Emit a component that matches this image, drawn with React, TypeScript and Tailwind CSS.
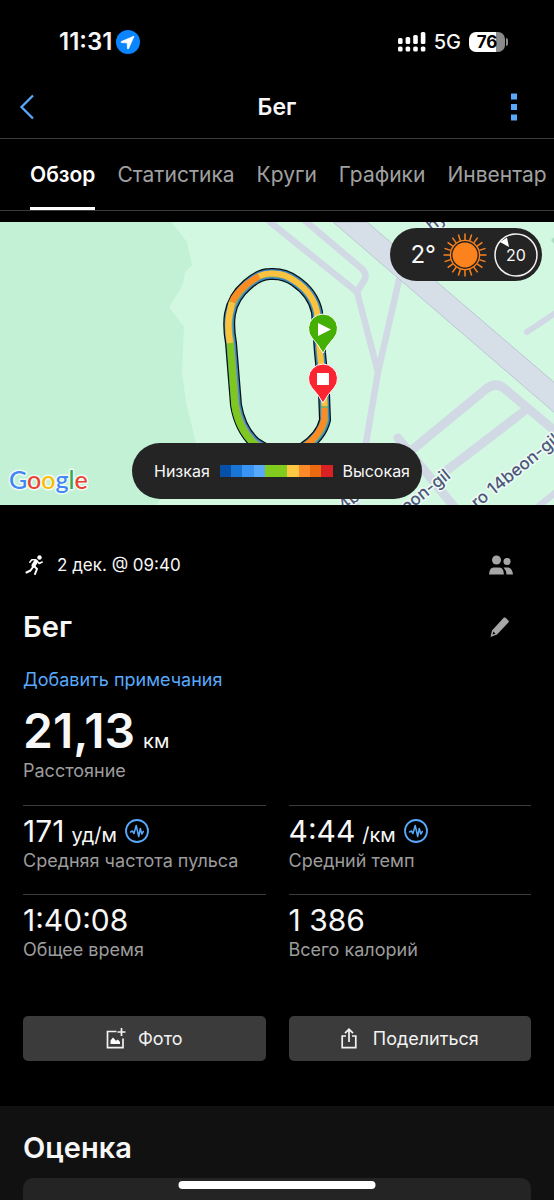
import React from "react";

function NavigationBadge() {
  return (
    <svg viewBox="0 0 24 24" className="h-6 w-6 shrink-0" aria-hidden="true">
      <circle cx="12" cy="12" r="12" fill="#0a84ff" />
      <path d="M18 6.200 L5.300 11.600 Q4.600 12.300 5.600 12.600 L11.200 12.800 L11.500 18.400 Q11.800 19.400 12.500 18.700 Z" fill="#fff" stroke="#fff" strokeWidth="0.800" strokeLinejoin="round" />
    </svg>
  );
}

function SignalIcon() {
  return (
    <svg viewBox="0 0 28 20" className="h-5 w-7 shrink-0" fill="#fff" aria-hidden="true">
      <rect x="0" y="6" width="4.600" height="6" rx="1.600" />
      <rect x="7.600" y="5" width="4.600" height="7" rx="1.600" />
      <rect x="15.200" y="3" width="4.600" height="9" rx="1.600" />
      <rect x="22.800" y="0" width="4.600" height="12" rx="1.600" />
      <rect x="0" y="14.500" width="4.600" height="5" rx="1.600" />
      <rect x="7.600" y="14.500" width="4.600" height="5" rx="1.600" />
      <rect x="15.200" y="14.500" width="4.600" height="5" rx="1.600" />
      <rect x="22.800" y="14.500" width="4.600" height="5" rx="1.600" />
    </svg>
  );
}

function StatusBar() {
  return (
    <div className="flex h-[84px] items-center justify-between pr-[46px] pl-[59px]">
      <div className="flex items-center gap-1">
        <span className="text-[24px] leading-7 font-semibold">11:31</span>
        <NavigationBadge />
      </div>
      <div className="flex items-center gap-2">
        <SignalIcon />
        <span className="text-[20px] leading-6 font-medium">5G</span>
        <div className="flex items-center gap-px">
          <div className="flex h-5 w-9 items-center justify-center overflow-hidden rounded-[7px] bg-linear-to-r from-white from-76% to-[#8a8a8a] to-76% text-[17px] leading-5 font-bold text-black">
            76
          </div>
          <span className="h-2 w-0.5 rounded-r-full bg-[#8a8a8a]" />
        </div>
      </div>
    </div>
  );
}

function Header() {
  return (
    <header className="grid h-[55px] grid-cols-3 items-center border-b border-[#3c3c3c] px-[19px] pb-2">
      <button type="button" aria-label="Назад" className="justify-self-start">
        <svg viewBox="0 0 16 26" className="h-[26px] w-4 fill-none stroke-[#58a9fb] stroke-[2.3]" aria-hidden="true">
          <path d="M14 1.500 L2.500 13 L14 24.500" />
        </svg>
      </button>
      <h1 className="justify-self-center text-[23px] leading-7 font-semibold">Бег</h1>
      <button type="button" aria-label="Меню" className="justify-self-end px-[18px]">
        <svg viewBox="0 0 6 28" className="h-7 w-1.5 fill-[#58a9fb]" aria-hidden="true">
          <path d="M0 0.500h6v6H0zM0 11h6v6H0zM0 21.500h6v6H0z" />
        </svg>
      </button>
    </header>
  );
}

const TABS = ["Обзор", "Статистика", "Круги", "Графики", "Инвентар"];

function Tabs() {
  return (
    <nav className="flex h-[72px] gap-[22px] overflow-hidden border-b border-[#3c3c3c] pl-[30px] text-[21px] leading-6">
      {TABS.map((tab, i) => (
        <button
          key={tab}
          type="button"
          aria-current={i === 0 ? "page" : undefined}
          className={
            i === 0
              ? "shrink-0 border-b-3 border-white pt-1 font-semibold text-white"
              : "shrink-0 border-b-3 border-transparent pt-1 text-[#a0a0a0]"
          }
        >
          {tab}
        </button>
      ))}
    </nav>
  );
}

const TRACK =
  "M284 234 Q268 230 255 221 Q240 207 236 183 L231 121 Q228 104 230 92 Q233 75 247 63 Q259 52 270 52 Q284 51 295 59 Q313 71 317 90 L320 131 L324 171 L325 198 Q321 215 302 227 Q294 232 284 234Z";

function MapDrawing() {
  return (
    <svg viewBox="0 0 554 283" preserveAspectRatio="xMidYMid slice" className="h-full w-full" aria-hidden="true">
      <rect width="554" height="283" fill="#d3f8e2" />
      <path d="M0 0H171L187 20L192 43L185 50Q184 60 180 68L169 85L184 105L182 151L186 180L196 221L157 283H0Z" fill="#c3f1d5" />
      <g fill="none" stroke="#d0d9e4" strokeWidth="6.500" strokeLinejoin="round" strokeLinecap="round">
        <path d="M270 0 L357 70 L378 150 L366 221 L356 283" />
        <path d="M303 -3 L361 46 Q367 51 365 57 L357 70" />
        <path d="M399 58 L378 150" />
        <path d="M412 228 L486 167 Q496 159 505 167 L554 208" strokeWidth="9" />
        <path d="M523 190 L446 249" strokeWidth="9" />
        <path d="M398 216 L456 287" strokeWidth="9" />
        <path d="M527 110 L560 88" strokeWidth="6" />
        <path d="M535 287 L560 267" />
      </g>
      <path d="M333 0H367L556 162V192Z" fill="#d6dfe8" stroke="#bcc6d4" strokeWidth="1" />
      <path d="M551 18L554 15V22Z" fill="#a9dfc0" />
      <g fontFamily="Inter, sans-serif" fontSize="17" fontWeight="500" fill="#4b5878" stroke="#eefaf5" strokeWidth="3" paintOrder="stroke" strokeLinejoin="round">
        <text transform="translate(477 287) rotate(-39)">ro 14beon-gil</text>
        <text transform="translate(390 305) rotate(-39)">4beon-gil</text>
        <text transform="translate(344 290) rotate(-39)">4beon</text>
        <text transform="translate(432 10) rotate(-39)">hy</text>
      </g>
      <g fill="none" strokeLinejoin="round">
        <path d={TRACK} stroke="#06140f" strokeWidth="12" />
        <path d={TRACK} stroke="#3b86c8" strokeWidth="9.500" />
        <path d={TRACK} stroke="#8fae5e" strokeWidth="6.500" />
        <path d="M268 230 L254 222 Q238 207 234.500 183 L230 121" stroke="#7dc81e" strokeWidth="6.500" />
        <path d="M230 121 Q227 104 229.500 92 L232 80" stroke="#f9c33f" strokeWidth="6.500" />
        <path d="M232 80 Q236 71 247 62 L259 54" stroke="#fb8c24" strokeWidth="6.500" />
        <path d="M259 54 Q266 51 272 51.500 Q284 51 295 59 Q313 71 317 90 L320 131 L324 171 L324.500 184" stroke="#f9c33f" strokeWidth="6" />
        <path d="M324.500 186 L324 198 Q320 214 302 226" stroke="#fb8c24" strokeWidth="6" />
      </g>
      <g>
        <path d="M323 131 Q318 122 312 116 A14.500 14.500 0 1 1 334 116 Q328 122 323 131Z" fill="#43b003" stroke="#fff" strokeWidth="1" />
        <path d="M318 101 L331 107.500 L318 114Z" fill="#fff" />
        <path d="M323 181 Q318 172 312 166 A14.500 14.500 0 1 1 334 166 Q328 172 323 181Z" fill="#fa2530" stroke="#fff" strokeWidth="1" />
        <rect x="317" y="151" width="12" height="12" fill="#fff" />
      </g>
      <text x="9" y="267" fontFamily="Lato, sans-serif" fontSize="25" fontWeight="500" stroke="#eefbf3" strokeWidth="3" paintOrder="stroke" strokeLinejoin="round">
        <tspan fill="#4285f4">G</tspan>
        <tspan fill="#ea4335">o</tspan>
        <tspan fill="#fbbc05">o</tspan>
        <tspan fill="#4285f4">g</tspan>
        <tspan fill="#34a853">l</tspan>
        <tspan fill="#ea4335">e</tspan>
      </text>
    </svg>
  );
}

const SUN_RAYS = Array.from({ length: 20 }, (_, i) => i * 18);

function SunIcon() {
  return (
    <svg viewBox="0 0 44 44" className="h-11 w-11 shrink-0" fill="none" stroke="#fc821d" aria-hidden="true">
      <circle cx="22" cy="22" r="12.500" fill="#fc821d" stroke="none" />
      <circle cx="22" cy="22" r="14.600" strokeWidth="1.300" />
      {SUN_RAYS.map((angle) => (
        <path key={angle} d="M22 0.500V7" strokeWidth="1.500" transform={`rotate(${angle} 22 22)`} />
      ))}
    </svg>
  );
}

function WindDial() {
  return (
    <div className="relative flex h-11 w-11 shrink-0 items-center justify-center">
      <svg viewBox="0 0 44 44" className="absolute inset-0 h-11 w-11" aria-hidden="true">
        <circle cx="22" cy="22" r="21" fill="none" stroke="#f2f2f2" strokeWidth="1.500" />
        <path d="M6 9 L13 4.500 L15 14Z" fill="#fff" />
      </svg>
      <span className="relative text-[16px] leading-5">20</span>
    </div>
  );
}

const SCALE = [
  "flex-2 bg-[#0650a8]",
  "flex-2 bg-[#1976d6]",
  "flex-2 bg-[#3a94f4]",
  "flex-2 bg-[#58a9fb]",
  "flex-4 bg-[#80cb1e]",
  "flex-2 bg-[#fcc742]",
  "flex-2 bg-[#fd8928]",
  "flex-2 bg-[#ec6910]",
  "flex-2 bg-[#d92025]",
];

function MapPanel() {
  return (
    <section className="relative mt-[11px] h-[283px] overflow-hidden">
      <MapDrawing />
      <div className="absolute top-1.5 right-3 flex h-[53px] items-center gap-[7px] rounded-full bg-[#242424] pr-1 pl-5">
        <span className="text-[24px] leading-7">2°</span>
        <SunIcon />
        <WindDial />
      </div>
      <div className="absolute bottom-1.5 left-1/2 flex h-14 w-[290px] -translate-x-1/2 items-center justify-between rounded-full bg-[#242424] pr-3 pl-[22px] text-[16px] leading-5">
        <span>Низкая</span>
        <div className="flex h-3 w-[113px]">
          {SCALE.map((color) => (
            <span key={color} className={color} />
          ))}
        </div>
        <span>Высокая</span>
      </div>
    </section>
  );
}

function RunnerIcon() {
  return (
    <svg viewBox="0 0 20 20" className="h-5 w-5 shrink-0" fill="none" stroke="#fff" strokeLinecap="round" strokeLinejoin="round" aria-hidden="true">
      <circle cx="14.500" cy="2.500" r="2.200" fill="#fff" stroke="none" />
      <path d="M11 6.500 L8.500 10.500" strokeWidth="4.200" />
      <path d="M10.500 4.800 L6.800 4.800 L4.800 7.200 M12.500 6.500 L14.200 8.500 L17.200 7" strokeWidth="1.500" />
      <path d="M8 12 L5.500 15.500 L1.500 17.500 M9.500 11.500 L12 14 L10 19" strokeWidth="2" />
    </svg>
  );
}

function PeopleIcon() {
  return (
    <svg viewBox="0 0 24 20" className="h-5 w-6" fill="#a6a6a6" aria-hidden="true">
      <circle cx="7.500" cy="5" r="4.500" />
      <circle cx="18" cy="6.500" r="3.500" />
      <path d="M0 19.500 Q0.500 12.500 4.500 12.500 H10.500 Q14.500 12.500 15 19.500Z" />
      <path d="M14.500 12.500 H19.500 Q23 13 24 19.500 H17.500 Q17.200 15 14.500 12.500Z" />
    </svg>
  );
}

function PencilIcon() {
  return (
    <svg viewBox="0 0 20 20" className="h-5 w-5" fill="#a6a6a6" aria-hidden="true">
      <path d="M13.700 0.800 Q14.700 0 15.700 0.800 L18.600 3.700 Q19.200 4.500 18.600 5.200 L7 17.500 L0.500 20 L2 13.500Z M3.400 14.500 L2.600 17.600 L5.500 16.700Z" fillRule="evenodd" />
    </svg>
  );
}

function PulseIcon() {
  return (
    <svg viewBox="0 0 24 24" className="h-6 w-6 shrink-0" fill="none" stroke="#58a9fb" strokeLinejoin="round" strokeLinecap="round" aria-hidden="true">
      <circle cx="12" cy="12" r="11" strokeWidth="1.800" />
      <path d="M5.500 13 L7.500 12 L9 14.500 L11.200 6.500 L13.700 17.500 L15.300 9.500 L16.800 15 L18.300 12.500" strokeWidth="1.500" />
    </svg>
  );
}

type StatProps = { value: string; unit?: string; label: string; pulse?: boolean };

function Stat({ value, unit, label, pulse }: StatProps) {
  return (
    <div className="h-[89px] border-t border-[#3c3c3c] pt-[9px]">
      <div className="flex h-8 items-center gap-2">
        <p className="flex items-baseline gap-[7px] text-[30px] leading-8">
          {value}
          {unit && <span className="text-[20px] leading-none">{unit}</span>}
        </p>
        {pulse && <PulseIcon />}
      </div>
      <p className="mt-0.5 text-[18px] leading-6 text-[#9c9c9c]">{label}</p>
    </div>
  );
}

function AddPhotoIcon() {
  return (
    <svg viewBox="0 0 20 21" className="h-[21px] w-5" fill="none" stroke="#f2f2f2" strokeWidth="1.700" aria-hidden="true">
      <path d="M10.500 3.500H1.500V19.700H17V10.500" />
      <path d="M15.500 0V8M11.500 4H19.500" />
      <path d="M4.500 16 V12.500 L7 9.500 L10 12.800 L12 11.500 L14 14 V16Z" fill="#fff" stroke="none" />
    </svg>
  );
}

function ShareIcon() {
  return (
    <svg viewBox="0 0 16 21" className="h-[21px] w-4" fill="none" stroke="#f2f2f2" strokeWidth="1.700" aria-hidden="true">
      <path d="M5 8H1.200V19.700H14.800V8H11" />
      <path d="M8 14V1.500M4 5.200L8 1.300L12 5.200" />
    </svg>
  );
}

const ACTION = "flex h-[45px] items-center justify-center rounded-[5px] bg-[#3b3b3b] text-[18px] leading-6 text-[#f2f2f2]";

export default function App() {
  return (
    <div className="h-screen overflow-hidden bg-black font-['Inter',sans-serif] text-[#f7f7f7]">
      <StatusBar />
      <Header />
      <Tabs />
      <MapPanel />
      <main>
        <div className="px-[23px] pt-12">
          <div className="flex h-6 items-center justify-between pr-[18px]">
            <div className="flex items-center gap-3 pl-0.5">
              <RunnerIcon />
              <span className="text-[17px] leading-6">2 дек. @ 09:40</span>
            </div>
            <PeopleIcon />
          </div>
          <div className="mt-[30px] flex h-10 items-center justify-between pr-[21px]">
            <h2 className="text-[29px] leading-10 font-semibold">Бег</h2>
            <button type="button" aria-label="Изменить">
              <PencilIcon />
            </button>
          </div>
          <a href="#notes" className="mt-[21px] block text-[18px] leading-6 text-[#58a9fb]">
            Добавить примечания
          </a>
          <p className="mt-[11px] flex items-baseline gap-2 text-[48px] leading-[56px] font-semibold">
            21,13
            <span className="text-[20px] leading-none font-normal">км</span>
          </p>
          <p className="text-[18px] leading-6 text-[#9c9c9c]">Расстояние</p>
          <div className="mt-[22px] grid grid-cols-2 gap-x-[23px]">
            <Stat value="171" unit="уд/м" label="Средняя частота пульса" pulse />
            <Stat value="4:44" unit="/км" label="Средний темп" pulse />
            <Stat value="1:40:08" label="Общее время" />
            <Stat value="1 386" label="Всего калорий" />
          </div>
          <div className="mt-[33px] grid grid-cols-2 gap-x-[23px]">
            <button type="button" className={`${ACTION} gap-3`}>
              <AddPhotoIcon />
              Фото
            </button>
            <button type="button" className={`${ACTION} gap-4`}>
              <ShareIcon />
              Поделиться
            </button>
          </div>
        </div>
        <section className="mt-[45px] bg-[#111] px-[23px] pt-6">
          <h2 className="text-[29px] leading-9 font-semibold">Оценка</h2>
          <div className="mt-3 h-32 rounded-[10px] bg-[#242424]" />
        </section>
      </main>
      <div className="fixed bottom-[11px] left-1/2 h-2 w-[197px] -translate-x-1/2 rounded-full bg-white" />
    </div>
  );
}
